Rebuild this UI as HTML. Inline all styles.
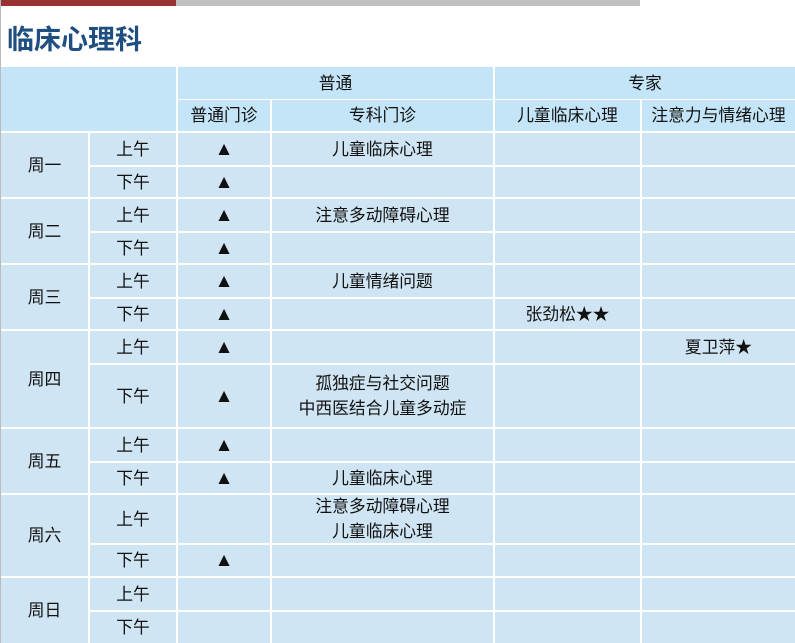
<!DOCTYPE html>
<html><head><meta charset="utf-8"><style>
html,body{margin:0;padding:0}
body{width:795px;height:643px;position:relative;background:#fff;overflow:hidden;font-family:"Liberation Sans","Microsoft YaHei","Noto Sans CJK SC",sans-serif;font-size:16.8px;color:#111}
.b{position:absolute;background:#cfe5f3;display:flex;align-items:center;justify-content:center;text-align:center;line-height:25px}
.h{background:#c3e5f7}
.t{font-size:19px}
#lb{position:absolute;left:0;top:0;width:1px;height:643px;background:#bbb}
</style></head><body>
<div style="position:absolute;left:0;top:0;width:176px;height:6px;background:#993333"></div>
<div style="position:absolute;left:176px;top:0;width:464px;height:6px;background:#c0c0c0"></div>
<div style="position:absolute;left:7px;top:18px;font-size:27px;font-weight:bold;color:#1f4e80">临床心理科</div>
<div id="lb"></div>

<div class="b h" style="left:1px;top:67px;width:175px;height:64px"></div>
<div class="b h" style="left:178px;top:67px;width:315px;height:32px">普通</div>
<div class="b h" style="left:495px;top:67px;width:300px;height:32px">专家</div>
<div class="b h" style="left:178px;top:100px;width:92px;height:31px">普通门诊</div>
<div class="b h" style="left:272px;top:100px;width:221px;height:31px">专科门诊</div>
<div class="b h" style="left:495px;top:100px;width:145px;height:31px">儿童临床心理</div>
<div class="b h" style="left:642px;top:100px;width:153px;height:31px">注意力与情绪心理</div>

<div class="b" style="left:1px;top:133px;width:87px;height:64px">周一</div>
<div class="b" style="left:1px;top:199px;width:87px;height:64px">周二</div>
<div class="b" style="left:1px;top:265px;width:87px;height:64px">周三</div>
<div class="b" style="left:1px;top:331px;width:87px;height:96px">周四</div>
<div class="b" style="left:1px;top:429px;width:87px;height:64px">周五</div>
<div class="b" style="left:1px;top:495px;width:87px;height:81px">周六</div>
<div class="b" style="left:1px;top:578px;width:87px;height:65px">周日</div>

<div class="b" style="left:90px;top:133px;width:86px;height:32px">上午</div>
<div class="b t" style="left:178px;top:133px;width:92px;height:32px">▲</div>
<div class="b" style="left:272px;top:133px;width:221px;height:32px">儿童临床心理</div>
<div class="b" style="left:495px;top:133px;width:145px;height:32px"></div>
<div class="b" style="left:642px;top:133px;width:153px;height:32px"></div>
<div class="b" style="left:90px;top:167px;width:86px;height:30px">下午</div>
<div class="b t" style="left:178px;top:167px;width:92px;height:30px">▲</div>
<div class="b" style="left:272px;top:167px;width:221px;height:30px"></div>
<div class="b" style="left:495px;top:167px;width:145px;height:30px"></div>
<div class="b" style="left:642px;top:167px;width:153px;height:30px"></div>

<div class="b" style="left:90px;top:199px;width:86px;height:32px">上午</div>
<div class="b t" style="left:178px;top:199px;width:92px;height:32px">▲</div>
<div class="b" style="left:272px;top:199px;width:221px;height:32px">注意多动障碍心理</div>
<div class="b" style="left:495px;top:199px;width:145px;height:32px"></div>
<div class="b" style="left:642px;top:199px;width:153px;height:32px"></div>
<div class="b" style="left:90px;top:233px;width:86px;height:30px">下午</div>
<div class="b t" style="left:178px;top:233px;width:92px;height:30px">▲</div>
<div class="b" style="left:272px;top:233px;width:221px;height:30px"></div>
<div class="b" style="left:495px;top:233px;width:145px;height:30px"></div>
<div class="b" style="left:642px;top:233px;width:153px;height:30px"></div>

<div class="b" style="left:90px;top:265px;width:86px;height:32px">上午</div>
<div class="b t" style="left:178px;top:265px;width:92px;height:32px">▲</div>
<div class="b" style="left:272px;top:265px;width:221px;height:32px">儿童情绪问题</div>
<div class="b" style="left:495px;top:265px;width:145px;height:32px"></div>
<div class="b" style="left:642px;top:265px;width:153px;height:32px"></div>
<div class="b" style="left:90px;top:299px;width:86px;height:30px">下午</div>
<div class="b t" style="left:178px;top:299px;width:92px;height:30px">▲</div>
<div class="b" style="left:272px;top:299px;width:221px;height:30px"></div>
<div class="b" style="left:495px;top:299px;width:145px;height:30px">张劲松★★</div>
<div class="b" style="left:642px;top:299px;width:153px;height:30px"></div>

<div class="b" style="left:90px;top:331px;width:86px;height:32px">上午</div>
<div class="b t" style="left:178px;top:331px;width:92px;height:32px">▲</div>
<div class="b" style="left:272px;top:331px;width:221px;height:32px"></div>
<div class="b" style="left:495px;top:331px;width:145px;height:32px"></div>
<div class="b" style="left:642px;top:331px;width:153px;height:32px">夏卫萍★</div>
<div class="b" style="left:90px;top:365px;width:86px;height:62px">下午</div>
<div class="b t" style="left:178px;top:365px;width:92px;height:62px">▲</div>
<div class="b" style="left:272px;top:365px;width:221px;height:62px">孤独症与社交问题<br>中西医结合儿童多动症</div>
<div class="b" style="left:495px;top:365px;width:145px;height:62px"></div>
<div class="b" style="left:642px;top:365px;width:153px;height:62px"></div>

<div class="b" style="left:90px;top:429px;width:86px;height:32px">上午</div>
<div class="b t" style="left:178px;top:429px;width:92px;height:32px">▲</div>
<div class="b" style="left:272px;top:429px;width:221px;height:32px"></div>
<div class="b" style="left:495px;top:429px;width:145px;height:32px"></div>
<div class="b" style="left:642px;top:429px;width:153px;height:32px"></div>
<div class="b" style="left:90px;top:463px;width:86px;height:30px">下午</div>
<div class="b t" style="left:178px;top:463px;width:92px;height:30px">▲</div>
<div class="b" style="left:272px;top:463px;width:221px;height:30px">儿童临床心理</div>
<div class="b" style="left:495px;top:463px;width:145px;height:30px"></div>
<div class="b" style="left:642px;top:463px;width:153px;height:30px"></div>

<div class="b" style="left:90px;top:495px;width:86px;height:48px">上午</div>
<div class="b" style="left:178px;top:495px;width:92px;height:48px"></div>
<div class="b" style="left:272px;top:495px;width:221px;height:48px">注意多动障碍心理<br>儿童临床心理</div>
<div class="b" style="left:495px;top:495px;width:145px;height:48px"></div>
<div class="b" style="left:642px;top:495px;width:153px;height:48px"></div>
<div class="b" style="left:90px;top:545px;width:86px;height:31px">下午</div>
<div class="b t" style="left:178px;top:545px;width:92px;height:31px">▲</div>
<div class="b" style="left:272px;top:545px;width:221px;height:31px"></div>
<div class="b" style="left:495px;top:545px;width:145px;height:31px"></div>
<div class="b" style="left:642px;top:545px;width:153px;height:31px"></div>

<div class="b" style="left:90px;top:578px;width:86px;height:32px">上午</div>
<div class="b" style="left:178px;top:578px;width:92px;height:32px"></div>
<div class="b" style="left:272px;top:578px;width:221px;height:32px"></div>
<div class="b" style="left:495px;top:578px;width:145px;height:32px"></div>
<div class="b" style="left:642px;top:578px;width:153px;height:32px"></div>
<div class="b" style="left:90px;top:612px;width:86px;height:31px">下午</div>
<div class="b" style="left:178px;top:612px;width:92px;height:31px"></div>
<div class="b" style="left:272px;top:612px;width:221px;height:31px"></div>
<div class="b" style="left:495px;top:612px;width:145px;height:31px"></div>
<div class="b" style="left:642px;top:612px;width:153px;height:31px"></div>
</body></html>
